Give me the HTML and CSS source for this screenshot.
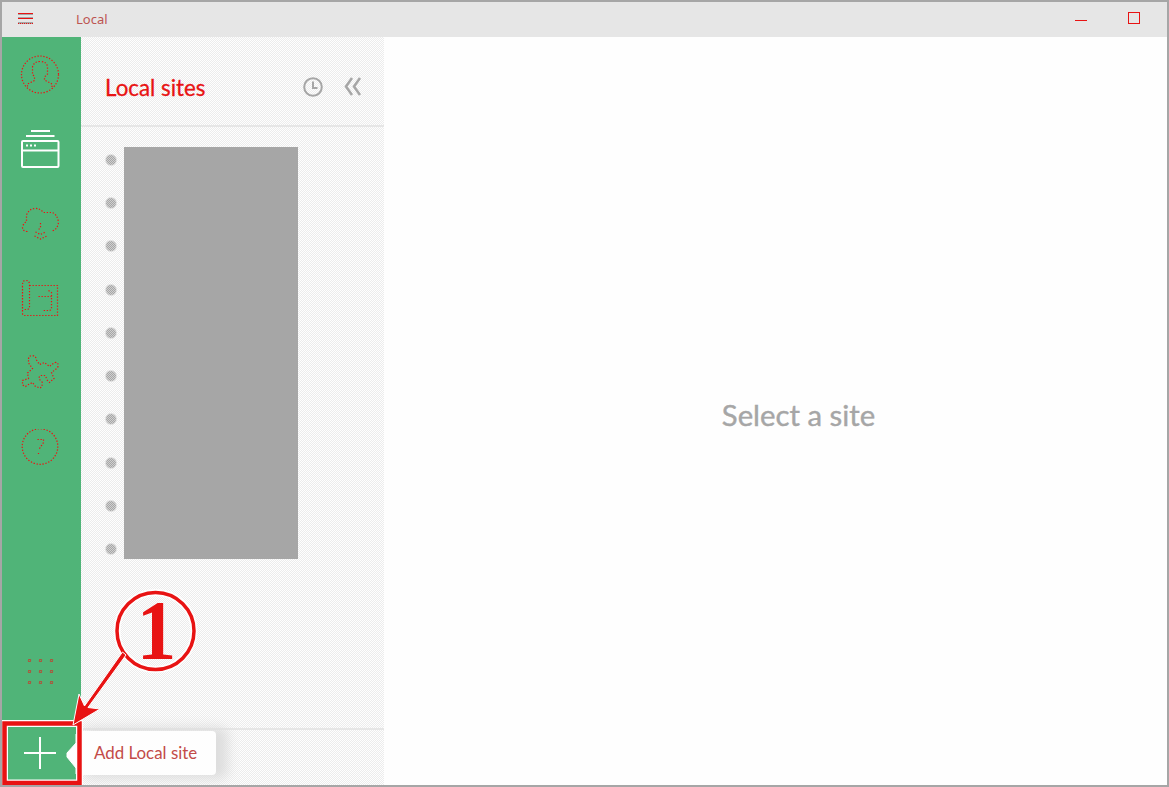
FILE: index.html
```html
<!DOCTYPE html>
<html lang="en">
  <head>
    <meta charset="UTF-8" />
    <meta name="viewport" content="width=device-width, initial-scale=1.0" />
    <title>Local</title>
    <link rel="stylesheet" href="styles.css">
  </head>
  <body>
    <div class="window">
      <header class="titlebar">
        <svg class="menu-icon" width="16" height="12" viewBox="0 0 16 12">
          <path class="menu-shade" d="M0 1.5H15M0 4.5H15M0 9.5H15M0 10.5H15" />
          <path class="menu-line" d="M0 .5H15M0 5.5H15" />
          <path class="menu-line dots" d="M0 10.5H15" />
        </svg>
        <span class="app-name">Local</span>
        <div class="window-buttons">
          <span class="minimize"></span>
          <span class="maximize"></span>
        </div>
      </header>

      <div class="content">
        <nav class="sidebar">
          <svg class="icon" viewBox="0 0 40 40">
            <circle cx="20" cy="20.5" r="18.5" />
            <path d="M7.5 32.5V30L14.5 26.5V23L12.5 20V13Q14 7.5 20 7.5Q27 7.5 27.5 13V20L24.5 23V26L32 30V33" />
          </svg>
          <svg class="icon active" viewBox="0 0 40 40">
            <path d="M11 2H30M6 7H34.5M2 21.5H39" />
            <rect x="2" y="12" width="36.5" height="26" rx="1" />
            <path class="window-dots" d="M6 16.5H16" />
          </svg>
          <svg class="icon" viewBox="0 0 40 40">
            <path d="M7.5 27.5Q2 27 2.5 22.5Q4 19 6.5 17.5V11Q9 5 14.5 4.5Q20 4 23.5 8.5H32Q37 10 38.5 18Q38 25 32 27" />
            <path d="M20.5 19V25M18.5 25H21M15.5 28L20.5 30.5L25.5 28M14.5 32L20.5 35L27 32" />
          </svg>
          <svg class="icon" viewBox="0 0 40 40">
            <path d="M9.5 6.5H37.5V36.5H4Q2.5 36 2.5 34V8Q2 1 6 1.5Q9.5 1.5 9.5 6V28L8 30.5H3" />
            <path d="M18.5 17.5H31.5M28.5 11.5L31.5 13.5V29L30 31.5H22.5" />
          </svg>
          <svg class="icon" viewBox="0 0 40 40">
            <path d="M8.5 5Q9 1.5 12.5 1.5Q16 2 16.5 6L19.5 10.5L24.5 8.5L29.5 12.5L34.5 8.5Q39.5 8 37.5 14L31.5 18.5L34 24.5L29.5 28.5L26.5 25.5Q26 21.5 24.5 21.5H20.5Q18.5 23 19.5 25.5L22.5 28.5Q22 34 19.5 34L15 32L12.5 28.5L8.5 30.5L5.5 32.5L2.5 31V26.5L8.5 24.5L7.5 19L12.5 14.5L8.5 9Z" />
          </svg>
          <svg class="icon" viewBox="0 0 40 40">
            <circle cx="20" cy="17.5" r="17.8" />
            <path d="M17.5 10.5H23.5V13.5L18.5 21M18.5 24V25" />
          </svg>
          <svg class="icon apps" viewBox="0 0 40 40">
            <path d="M8.5 8.5h2v2h-2zM19.5 8.5h2v2h-2zM30.5 8.5h2v2h-2zM8.5 19.5h2v2h-2zM19.5 19.5h2v2h-2zM30.5 19.5h2v2h-2zM8.5 30.5h2v2h-2zM19.5 30.5h2v2h-2zM30.5 30.5h2v2h-2z" />
          </svg>
          <svg class="add-icon" viewBox="0 0 32 32">
            <path d="M0 16H32M16 0V32" />
          </svg>
        </nav>

        <aside class="sites">
          <div class="sites-header">
            <h1>Local sites</h1>
            <svg class="clock" viewBox="0 0 20 20">
              <circle cx="10" cy="10" r="8.8" />
              <path d="M10 4.5V11H14.5" />
            </svg>
            <svg class="collapse" viewBox="0 0 18 20">
              <path d="M8 1L2 9.5L8 18M16 1L10 9.5L16 18" />
            </svg>
          </div>
          <div class="site-list">
            <div class="statuses">
              <i></i><i></i><i></i><i></i><i></i><i></i><i></i><i></i><i></i><i></i>
            </div>
            <div class="site-names"></div>
          </div>
          <div class="sites-footer"></div>
        </aside>

        <main class="main">
          <p>Select a site</p>
        </main>
      </div>

      <div class="tooltip">Add Local site</div>

      <svg class="callout" viewBox="0 0 220 210">
        <path class="white" d="M76 158V198M76 167L67 177V181L76 192Z" />
        <rect class="halo" x="4.5" y="147.5" width="75" height="59.5" />
        <rect class="box" x="4.5" y="147.5" width="75" height="59.5" />
        <circle class="halo" cx="155.5" cy="55" r="38.5" />
        <circle class="ring" cx="155.5" cy="55" r="38.5" />
        <text transform="translate(156.5 83) scale(.94 1)" text-anchor="middle">1</text>
        <path class="arrow" d="M122.5 76L84.5 130L79 118L73 149L100 133L88 131.5L126 79Z" />
      </svg>
    </div>
  </body>
</html>
```
FILE: styles.css
```css
* {
  box-sizing: border-box;
}
body {
  margin: 0;
  font-family: Lato, "Open Sans", sans-serif;
}
.window {
  position: relative;
  display: flex;
  flex-direction: column;
  width: 1169px;
  height: 787px;
  border: 2px solid #a6a6a6;
  background: #fefefe;
  overflow: hidden;
}
.titlebar {
  display: flex;
  align-items: flex-start;
  height: 35px;
  padding: 0 27px 0 16px;
  background: #e6e6e6;
}
.menu-icon {
  margin-top: 11px;
  fill: none;
}
.menu-shade {
  stroke: #a6a6a6;
}
.menu-line {
  stroke: #e81313;
}
.dots {
  stroke-dasharray: 1 1;
}
.app-name {
  margin-left: 42px;
  font-family: "Noto Sans", sans-serif;
  font-size: 13px;
  line-height: 34px;
  color: #bd5552;
}
.window-buttons {
  display: flex;
  align-items: flex-start;
  gap: 41px;
  margin-left: auto;
}
.minimize {
  width: 12px;
  height: 1px;
  margin-top: 18px;
  background: #e81313;
}
.maximize {
  width: 12px;
  height: 12px;
  margin-top: 10px;
  border: 1px solid #e81313;
}
.content {
  display: flex;
  flex: 1;
}
.sidebar {
  display: flex;
  flex-direction: column;
  align-items: center;
  gap: 35px;
  width: 79px;
  padding: 17px 3px 16px 0;
  background: #50b478;
}
.icon {
  flex: none;
  width: 40px;
  height: 40px;
  fill: none;
  stroke: #f01010;
  stroke-width: 1.2;
  stroke-dasharray: 1.3 1.7;
}
.active {
  stroke: #fefefe;
  stroke-width: 2;
  stroke-dasharray: none;
}
.window-dots {
  stroke-dasharray: 2 2;
}
.apps {
  margin-top: auto;
  stroke-dasharray: 1 1;
}
.add-icon {
  width: 32px;
  height: 32px;
  margin-top: 11px;
  fill: none;
  stroke: #fefefe;
  stroke-width: 2;
}
.sites {
  display: flex;
  flex-direction: column;
  width: 303px;
  background: repeating-conic-gradient(#ececec 0 25%, #fefefe 0 50%) 0 0 / 2px 2px;
}
.sites-header {
  display: flex;
  align-items: center;
  height: 90px;
  padding: 12px 22px 0 24px;
  border-bottom: 2px solid #e6e6e6;
}
h1 {
  margin: 0 auto 0 0;
  font-size: 22.3px;
  font-weight: 400;
  color: #e81313;
  -webkit-text-stroke: 0.3px #e81313;
}
.clock,
.collapse {
  width: 20px;
  height: 20px;
  fill: none;
  stroke: #a6a6a6;
  stroke-width: 2;
}
.collapse {
  width: 18px;
  margin-left: 21px;
  stroke-width: 2.5;
}
.site-list {
  display: flex;
  gap: 7px;
  padding: 20px 0 0 24px;
}
.statuses {
  display: flex;
  flex-direction: column;
  justify-content: space-between;
  height: 401px;
  margin-top: 7px;
}
.statuses i {
  width: 12px;
  height: 12px;
  border: 1px solid #e0e0e0;
  border-radius: 50%;
  background: repeating-conic-gradient(#a6a6a6 0 25%, #d0d0d0 0 50%) 0 0 / 2px 2px;
}
.site-names {
  width: 174px;
  height: 412px;
  background: #a6a6a6;
}
.sites-footer {
  height: 57px;
  margin-top: auto;
  border-top: 2px solid #e6e6e6;
}
.main {
  display: flex;
  flex: 1;
  align-items: center;
  justify-content: center;
  padding: 6px 0 0 46px;
}
.main p {
  margin: 0;
  font-size: 29.3px;
  color: #a6a6a6;
  -webkit-text-stroke: 0.4px #a6a6a6;
}
.tooltip {
  position: absolute;
  left: 79px;
  top: 729px;
  width: 135px;
  height: 44px;
  padding-left: 13px;
  border-radius: 0 4px 4px 0;
  background: #fefefe;
  box-shadow: 8px 0 12px 4px #dedede;
  clip-path: inset(-20px -30px -20px 0);
  font-size: 16.9px;
  line-height: 44px;
  color: #c34b48;
}
.callout {
  position: absolute;
  left: -2px;
  top: 574px;
  width: 220px;
  height: 210px;
  overflow: visible;
  fill: none;
}
.white {
  fill: #fefefe;
  stroke: #fefefe;
}
.halo {
  stroke: #fefefe;
  stroke-width: 7;
}
.box {
  stroke: #e81313;
  stroke-width: 4.5;
}
.ring {
  stroke: #e81313;
  stroke-width: 3.5;
}
.callout text {
  font-family: "Liberation Serif", serif;
  font-size: 84px;
  font-weight: 700;
  fill: #e81313;
}
.arrow {
  fill: #e81313;
  stroke: #fefefe;
}
```
